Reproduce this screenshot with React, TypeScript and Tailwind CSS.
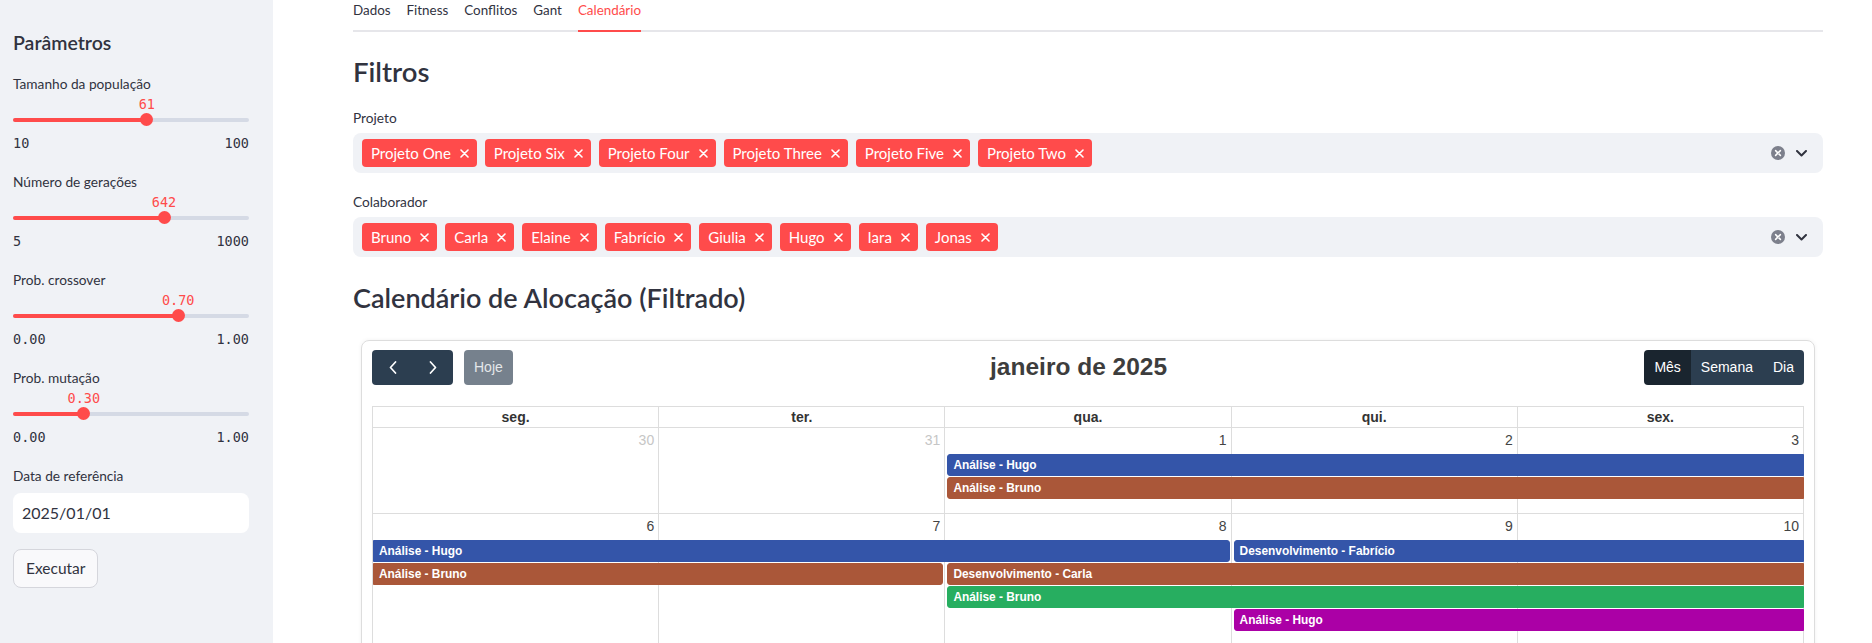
import React from 'react';

interface SliderSpec {
  label: string;
  value: string;
  min: string;
  max: string;
  pct: number;
}

interface CalEvent {
  title: string;
  cls: string;
}

const sliders: SliderSpec[] = [
  { label: 'Tamanho da população', value: '61', min: '10', max: '100', pct: 56.7 },
  { label: 'Número de gerações', value: '642', min: '5', max: '1000', pct: 64.0 },
  { label: 'Prob. crossover', value: '0.70', min: '0.00', max: '1.00', pct: 70 },
  { label: 'Prob. mutação', value: '0.30', min: '0.00', max: '1.00', pct: 30 },
];

const projetos = ['Projeto One', 'Projeto Six', 'Projeto Four', 'Projeto Three', 'Projeto Five', 'Projeto Two'];
const colaboradores = ['Bruno', 'Carla', 'Elaine', 'Fabrício', 'Giulia', 'Hugo', 'Iara', 'Jonas'];
const tabs = ['Dados', 'Fitness', 'Conflitos', 'Gant', 'Calendário'];
const weekdays = ['seg.', 'ter.', 'qua.', 'qui.', 'sex.'];
const cols = ['col-start-1', 'col-start-2', 'col-start-3', 'col-start-4', 'col-start-5'];

// start = left margin + rounded left, end = right margin + rounded right
const START = 'ml-[2px] rounded-l-[3px]';
const END = 'mr-[2px] rounded-r-[3px]';
const BLUE = 'bg-[#3455a9] border-[#3455a9]';
const BROWN = 'bg-[#aa5739] border-[#aa5739]';
const GREEN = 'bg-[#27ae60] border-[#27ae60]';
const PURPLE = 'bg-[#ab00a6] border-[#ab00a6]';

const weeks: { days: { n: number; other?: boolean }[]; rows: string; height: string; events: CalEvent[] }[] = [
  {
    days: [{ n: 30, other: true }, { n: 31, other: true }, { n: 1 }, { n: 2 }, { n: 3 }],
    rows: 'grid-rows-[25px_22px_22px_1fr]',
    height: 'h-[86px]',
    events: [
      { title: 'Análise - Hugo', cls: `col-start-3 col-span-3 row-start-2 ${START} ${BLUE}` },
      { title: 'Análise - Bruno', cls: `col-start-3 col-span-3 row-start-3 ${START} ${BROWN}` },
    ],
  },
  {
    days: [{ n: 6 }, { n: 7 }, { n: 8 }, { n: 9 }, { n: 10 }],
    rows: 'grid-rows-[25px_22px_22px_22px_22px_1fr]',
    height: 'h-[170px]',
    events: [
      { title: 'Análise - Hugo', cls: `col-start-1 col-span-3 row-start-2 ${END} ${BLUE}` },
      { title: 'Desenvolvimento - Fabrício', cls: `col-start-4 col-span-2 row-start-2 ${START} ${BLUE}` },
      { title: 'Análise - Bruno', cls: `col-start-1 col-span-2 row-start-3 ${END} ${BROWN}` },
      { title: 'Desenvolvimento - Carla', cls: `col-start-3 col-span-3 row-start-3 ${START} ${BROWN}` },
      { title: 'Análise - Bruno', cls: `col-start-3 col-span-3 row-start-4 ${START} ${GREEN}` },
      { title: 'Análise - Hugo', cls: `col-start-4 col-span-2 row-start-5 ${START} ${PURPLE}` },
    ],
  },
];

const Slider: React.FC<{ s: SliderSpec }> = ({ s }) => (
  <div className="mb-[19px]">
    <div className="text-[13.7px] leading-[20px] text-[#31333f]">{s.label}</div>
    <div className="relative h-[36px]">
      <div
        className="absolute top-[2px] -translate-x-1/2 font-['DejaVu_Sans_Mono',monospace] text-[13.5px] leading-[16px] text-[#ff4b4b]"
        style={{ left: `${s.pct}%` }}
      >
        {s.value}
      </div>
      <div className="absolute top-[24px] left-0 right-0 h-[4px] rounded-full bg-[#d5dae5]">
        <div className="h-full rounded-full bg-[#ff4b4b]" style={{ width: `${s.pct}%` }} />
      </div>
      <div
        className="absolute top-[19px] w-[13px] h-[13px] -ml-[6.5px] rounded-full bg-[#ff4b4b]"
        style={{ left: `${s.pct}%` }}
      />
    </div>
    <div className="mt-[3px] flex justify-between font-['DejaVu_Sans_Mono',monospace] text-[13.5px] leading-[20px] text-[#31333f]">
      <span>{s.min}</span>
      <span>{s.max}</span>
    </div>
  </div>
);

const Tag: React.FC<{ label: string }> = ({ label }) => (
  <span className="flex items-center h-[28px] pl-[9px] pr-[8px] rounded-[4px] bg-[#ff4b4b] text-white text-[15px] leading-[20px]">
    {label}
    <svg className="ml-[9px]" width="9" height="9" viewBox="0 0 9 9">
      <path d="M1 1L8 8M8 1L1 8" stroke="white" strokeWidth="1.6" strokeLinecap="round" />
    </svg>
  </span>
);

const MultiSelect: React.FC<{ label: string; items: string[]; top: string }> = ({ label, items, top }) => (
  <div className={top}>
    <div className="text-[13.7px] leading-[20px] text-[#31333f]">{label}</div>
    <div className="mt-[5px] h-[40px] rounded-lg bg-[#f0f2f6] flex items-center pl-[9px] pr-[16px]">
      <div className="flex gap-[8px]">
        {items.map((it) => (
          <Tag key={it} label={it} />
        ))}
      </div>
      <div className="ml-auto flex items-center gap-[11px]">
        <svg width="14" height="14" viewBox="0 0 14 14">
          <circle cx="7" cy="7" r="7" fill="#7d808c" />
          <path d="M4.6 4.6L9.4 9.4M9.4 4.6L4.6 9.4" stroke="white" strokeWidth="1.5" strokeLinecap="round" />
        </svg>
        <svg width="11" height="7" viewBox="0 0 11 7">
          <path d="M1 1L5.5 5.5L10 1" stroke="#31333f" strokeWidth="2" fill="none" strokeLinecap="round" strokeLinejoin="round" />
        </svg>
      </div>
    </div>
  </div>
);

const Chevron: React.FC<{ dir: 'left' | 'right' }> = ({ dir }) => (
  <svg width="8" height="13" viewBox="0 0 8 13">
    <path
      d={dir === 'left' ? 'M6.5 1L1.5 6.5L6.5 12' : 'M1.5 1L6.5 6.5L1.5 12'}
      stroke="white"
      strokeWidth="1.7"
      fill="none"
      strokeLinecap="round"
      strokeLinejoin="round"
    />
  </svg>
);

const Calendar: React.FC = () => (
  <div className="mx-[8px] mt-[24px] rounded-[8px] border border-[#dddddd] shadow-[0_0_4px_rgba(0,0,0,0.06)] px-[10px] pt-[9px] font-['Liberation_Sans',Arial,sans-serif] text-[14px]">
    <div className="flex items-center justify-between h-[35px] mb-[21px]">
      <div className="flex items-center">
        <div className="flex">
          <button className="w-[41px] h-[35px] flex items-center justify-center bg-[#2c3e50] rounded-l-[4px]">
            <Chevron dir="left" />
          </button>
          <button className="w-[40px] h-[35px] flex items-center justify-center bg-[#2c3e50] rounded-r-[4px]">
            <Chevron dir="right" />
          </button>
        </div>
        <button className="ml-[11px] h-[35px] px-[10px] rounded-[4px] bg-[#76818d] text-[#e4e7ea]">Hoje</button>
      </div>
      <h2 className="text-[24.5px] font-bold text-[#3d3d3d] leading-none">janeiro de 2025</h2>
      <div className="flex h-[35px] text-white">
        <button className="px-[10px] bg-[#1a252f] rounded-l-[4px]">Mês</button>
        <button className="px-[10px] bg-[#2c3e50]">Semana</button>
        <button className="px-[10px] bg-[#2c3e50] rounded-r-[4px]">Dia</button>
      </div>
    </div>

    <div className="border-t border-l border-[#dddddd]">
      <div className="grid grid-cols-5">
        {weekdays.map((d) => (
          <div key={d} className="border-r border-b border-[#dddddd] py-[2px] text-center font-bold leading-[16px] text-[#333333]">
            {d}
          </div>
        ))}
      </div>
      {weeks.map((w, wi) => (
        <div key={wi} className={`grid grid-cols-5 gap-y-px ${w.rows} ${w.height}`}>
          {w.days.map((d, di) => (
            <div key={di} className={`${cols[di]} row-span-full border-r border-b border-[#dddddd] flex justify-end`}>
              <span className={`p-[4px] leading-[16px] h-fit ${d.other ? 'text-[#c6c6c6]' : 'text-[#444444]'}`}>{d.n}</span>
            </div>
          ))}
          {w.events.map((e, ei) => (
            <div
              key={ei}
              className={`${e.cls} border pl-[5px] text-[11.9px] font-bold leading-[20px] text-white whitespace-nowrap overflow-hidden`}
            >
              {e.title}
            </div>
          ))}
        </div>
      ))}
    </div>
  </div>
);

export default function App() {
  return (
    <div className="flex w-[1872px] h-[643px] overflow-hidden bg-white font-['Source_Sans_Pro',Lato,sans-serif] text-[#31333f]">
      <aside className="w-[273px] shrink-0 bg-[#f0f2f6] pl-[13px] pr-[24px] pt-[29px]">
        <h3 className="text-[19.5px] leading-[28px] font-semibold">Parâmetros</h3>
        <div className="mt-[17px]">
          {sliders.map((s) => (
            <Slider key={s.label} s={s} />
          ))}
        </div>
        <div className="text-[13.7px] leading-[20px]">Data de referência</div>
        <div className="mt-[7px] h-[40px] rounded-lg bg-white flex items-center pl-[9px] text-[16px]">2025/01/01</div>
        <button className="mt-[16px] h-[39px] px-[12px] rounded-lg border border-[#d5d6dc] bg-[#f9f9fb] text-[15.5px]">
          Executar
        </button>
      </aside>

      <main className="flex-1 pl-[80px] pr-[49px]">
        <div className="flex gap-[16px] h-[32px] border-b-2 border-[#e6e6ea]">
          {tabs.map((t) => {
            const active = t === 'Calendário';
            return (
              <div
                key={t}
                className={`h-[32px] text-[13.4px] leading-[20px] ${
                  active ? 'text-[#ff4b4b] border-b-2 border-[#ff4b4b]' : 'text-[#31333f]'
                }`}
              >
                {t}
              </div>
            );
          })}
        </div>

        <h2 className="mt-[22px] text-[27.5px] leading-[36px] font-semibold">Filtros</h2>
        <MultiSelect label="Projeto" items={projetos} top="mt-[18px]" />
        <MultiSelect label="Colaborador" items={colaboradores} top="mt-[19px]" />

        <h2 className="mt-[23px] text-[27px] leading-[36px] font-semibold">Calendário de Alocação (Filtrado)</h2>
        <Calendar />
      </main>
    </div>
  );
}
